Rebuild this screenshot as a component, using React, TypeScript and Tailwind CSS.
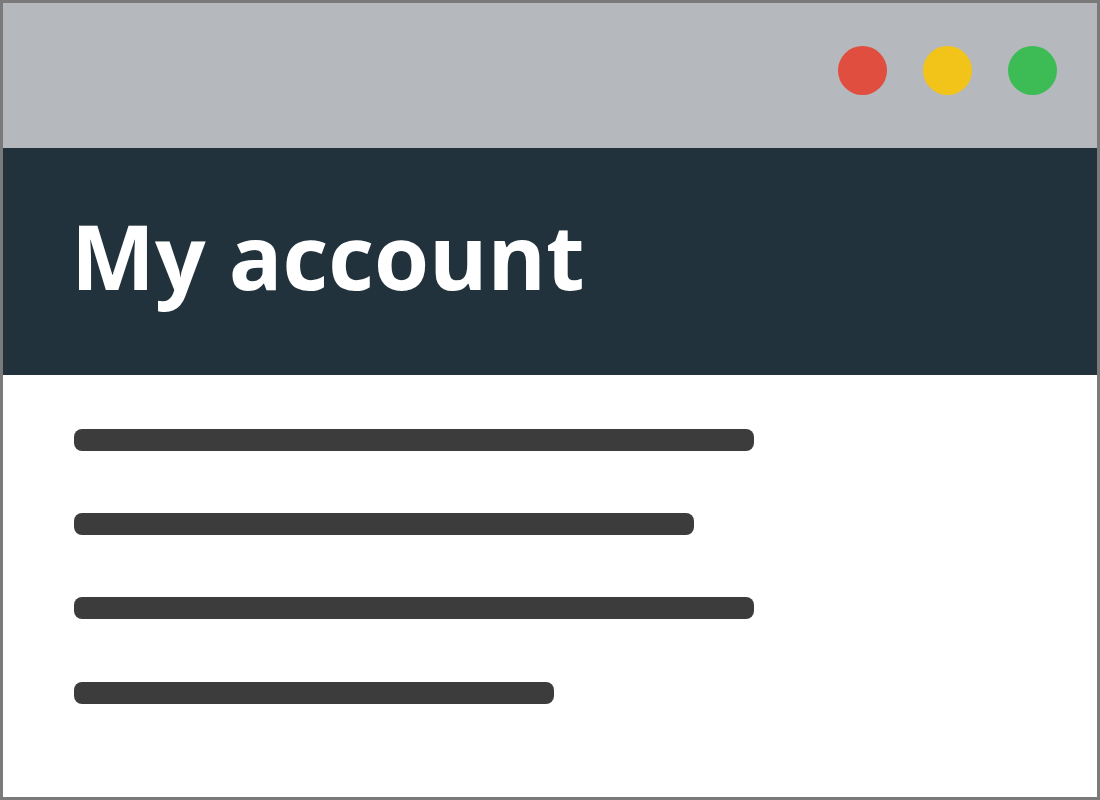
import React from "react";

export default function App() {
  const bars = [680, 620, 680, 480];
  return (
    <div className="w-[1100px] h-[800px] border-[3px] border-[#7a7a7a] bg-white flex flex-col overflow-hidden">
      <div className="h-[145px] bg-[#b5b8bc] flex justify-end items-start pt-[43px] pr-[40px] gap-[36px] shrink-0">
        <div className="w-[49px] h-[49px] rounded-full bg-[#df4e3f]" />
        <div className="w-[49px] h-[49px] rounded-full bg-[#f2c318]" />
        <div className="w-[49px] h-[49px] rounded-full bg-[#3dbb55]" />
      </div>
      <div className="h-[227px] bg-[#22323c] shrink-0 pl-[68px] pt-[63px]">
        <h1
          className="text-white text-[89px] leading-none font-bold"
          style={{ fontFamily: '"Open Sans", sans-serif' }}
        >
          My account
        </h1>
      </div>
      <div className="flex flex-col pl-[71px] pt-[54px] gap-[62px]">
        {bars.map((w, i) => (
          <div
            key={i}
            className={"h-[22px] rounded-[8px] bg-[#3c3c3c]" + (i === 3 ? " mt-[1px]" : "")}
            style={{ width: w }}
          />
        ))}
      </div>
    </div>
  );
}
